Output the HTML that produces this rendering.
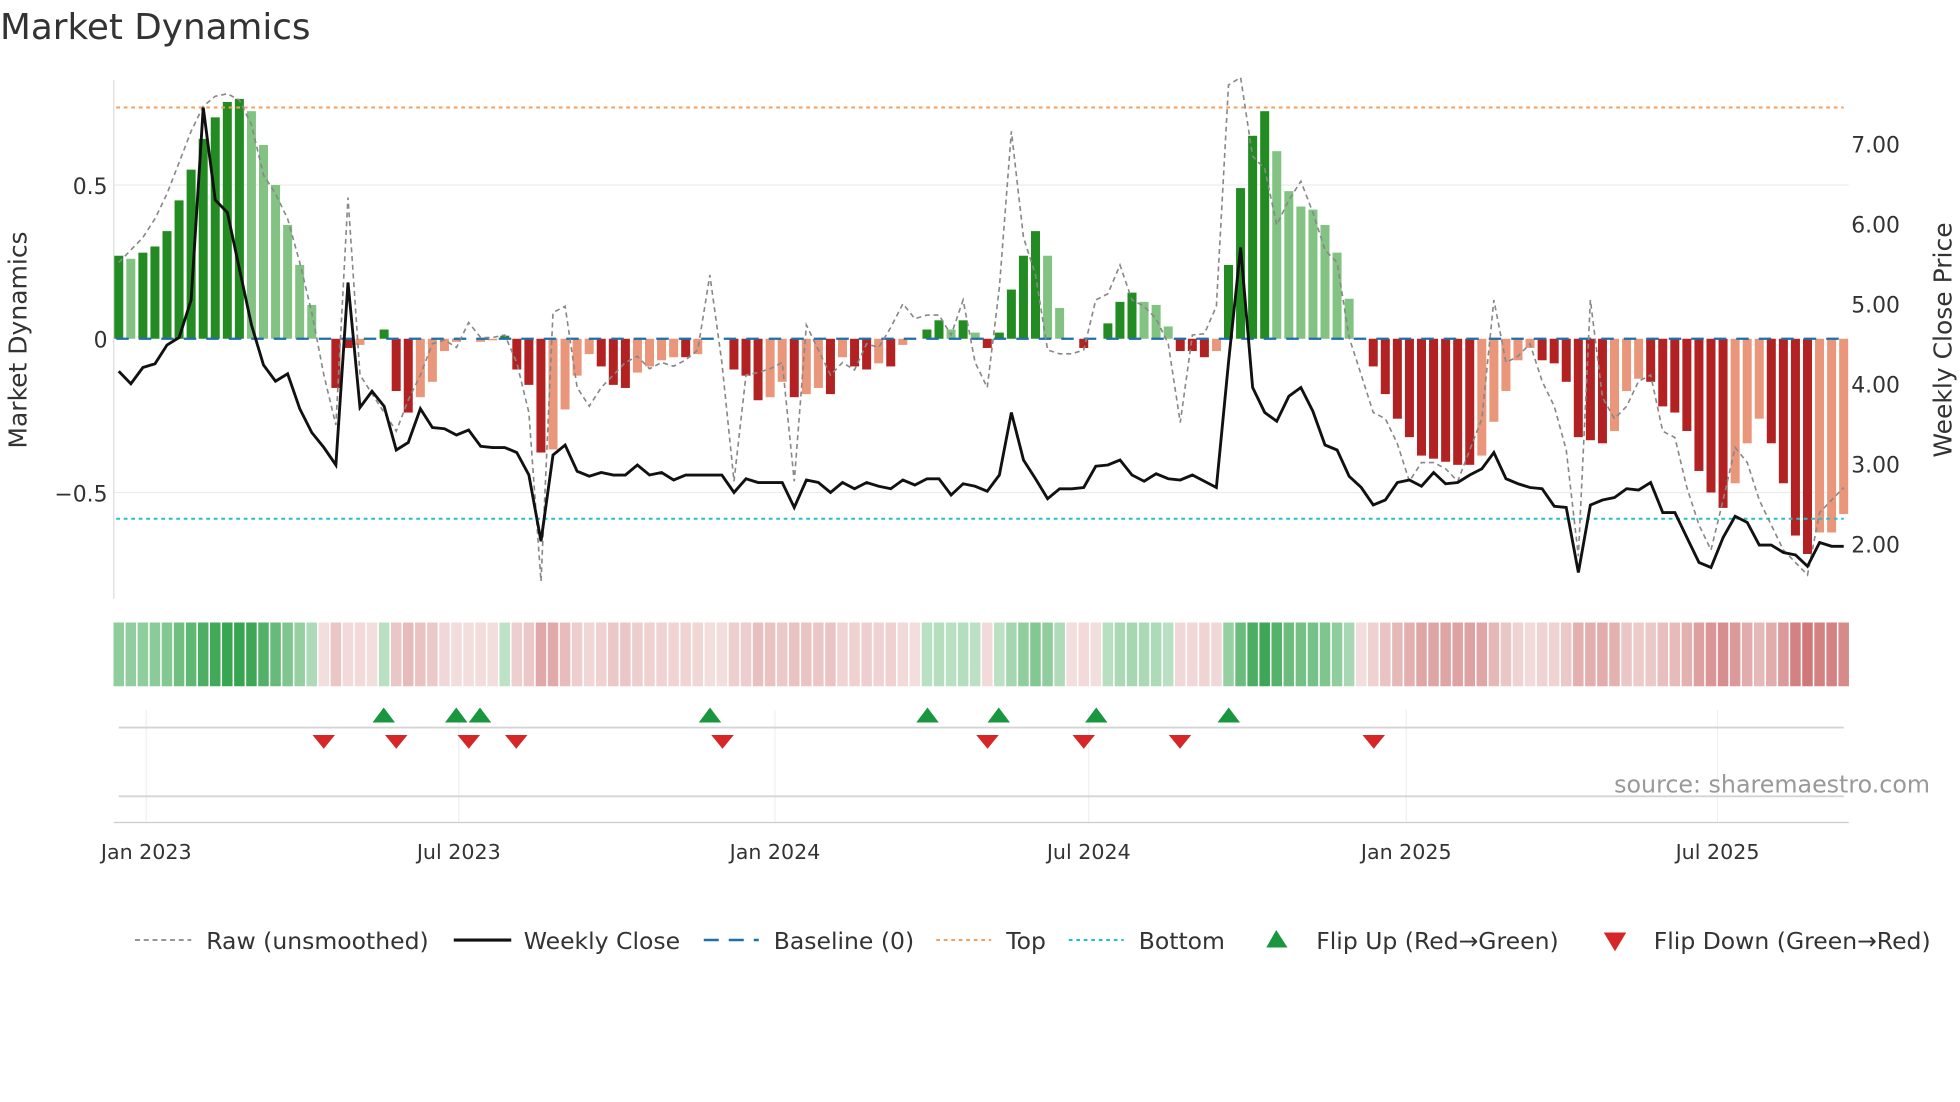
<!DOCTYPE html>
<html><head><meta charset="utf-8"><style>
html,body{margin:0;padding:0;background:#fff;width:1960px;height:1102px;overflow:hidden}
svg text{font-family:"DejaVu Sans","Liberation Sans",sans-serif;fill:#333}
</style></head><body>
<svg id="s" width="1960" height="1102" viewBox="0 0 1568 881.6" xmlns="http://www.w3.org/2000/svg">
<text x="0" y="31" font-size="28.6">Market Dynamics</text>
<g stroke="#ececec" stroke-width="1">
<line x1="91" y1="148" x2="1479" y2="148"/><line x1="91" y1="394" x2="1479" y2="394"/>
</g>
<line x1="91" y1="64" x2="91" y2="479" stroke="#ddd"/>
<g id="bars"></g>
<line x1="93" y1="86" x2="1475" y2="86" stroke="#f0a060" stroke-width="1.6" stroke-dasharray="3,3"/>
<line x1="93" y1="415" x2="1475" y2="415" stroke="#22c0d0" stroke-width="1.6" stroke-dasharray="3,3"/>
<line x1="93" y1="271" x2="1475" y2="271" stroke="#1f6fa8" stroke-width="1.8" stroke-dasharray="10,8"/>
<polyline id="raw" fill="none" stroke="#888" stroke-width="1.3" stroke-dasharray="4,3"/>
<polyline id="close" fill="none" stroke="#111" stroke-width="2.3"/>
<g font-size="17.5">
<text x="86" y="155" text-anchor="end">0.5</text>
<text x="86" y="278" text-anchor="end">0</text>
<text x="86" y="401" text-anchor="end">−0.5</text>
<text x="1481" y="122">7.00</text><text x="1481" y="186">6.00</text><text x="1481" y="250">5.00</text>
<text x="1481" y="314">4.00</text><text x="1481" y="378">3.00</text><text x="1481" y="442">2.00</text>
</g>
<text transform="translate(21,272) rotate(-90)" font-size="20" text-anchor="middle">Market Dynamics</text>
<text transform="translate(1561,272) rotate(-90)" font-size="20" text-anchor="middle">Weekly Close Price</text>
<g id="heat"></g>
<g stroke="#eef0f2"><line x1="117" y1="568" x2="117" y2="658"/><line x1="367" y1="568" x2="367" y2="658"/><line x1="620" y1="568" x2="620" y2="658"/><line x1="871" y1="568" x2="871" y2="658"/><line x1="1125" y1="568" x2="1125" y2="658"/><line x1="1374" y1="568" x2="1374" y2="658"/></g>
<line x1="95" y1="582" x2="1475" y2="582" stroke="#d4d4d4" stroke-width="1.5"/>
<line x1="95" y1="637" x2="1475" y2="637" stroke="#d4d4d4" stroke-width="1.5"/>
<line x1="91" y1="658" x2="1479" y2="658" stroke="#ccc"/>
<g id="tri"></g>
<text x="1544" y="634" font-size="19" text-anchor="end" fill="#999" style="fill:#999">source: sharemaestro.com</text>
<g font-size="16.5" text-anchor="middle">
<text x="117" y="687">Jan 2023</text><text x="367" y="687">Jul 2023</text><text x="620" y="687">Jan 2024</text>
<text x="871" y="687">Jul 2024</text><text x="1125" y="687">Jan 2025</text><text x="1374" y="687">Jul 2025</text>
</g>
<g font-size="18.8">
<line x1="108" y1="752" x2="153" y2="752" stroke="#888" stroke-width="1.4" stroke-dasharray="4,3"/>
<text x="165" y="759">Raw (unsmoothed)</text>
<line x1="363" y1="752" x2="409" y2="752" stroke="#111" stroke-width="2.5"/>
<text x="419" y="759">Weekly Close</text>
<line x1="563" y1="752" x2="607" y2="752" stroke="#1f6fa8" stroke-width="2" stroke-dasharray="12,8"/>
<text x="619" y="759">Baseline (0)</text>
<line x1="749" y1="752" x2="793" y2="752" stroke="#f0a060" stroke-width="1.6" stroke-dasharray="3,3"/>
<text x="805" y="759">Top</text>
<line x1="855" y1="752" x2="899" y2="752" stroke="#22c0d0" stroke-width="1.6" stroke-dasharray="3,3"/>
<text x="911" y="759">Bottom</text>
<polygon points="1013,758 1021,744 1030,758" fill="#1a9641"/>
<text x="1053" y="759">Flip Up (Red→Green)</text>
<polygon points="1283,746 1301,746 1292,761" fill="#d62728"/>
<text x="1323" y="759">Flip Down (Green→Red)</text>
</g>
</svg>
<script>
var V=[[.27,1],[.26,0],[.28,1],[.30,1],[.35,1],[.45,1],[.55,1],[.65,1],[.72,1],[.77,1],[.78,1],[.74,0],[.63,0],[.50,0],[.37,0],[.24,0],[.11,0],[0,0],[-.16,1],[-.03,1],[-.02,0],[0,0],[.03,1],[-.17,1],[-.24,1],[-.19,0],[-.14,0],[-.04,0],[-.01,0],[0,0],[-.01,0],[-.005,0],[.01,1],[-.10,1],[-.15,1],[-.37,1],[-.36,0],[-.23,0],[-.12,0],[-.05,0],[-.09,1],[-.15,1],[-.16,1],[-.11,0],[-.09,0],[-.07,0],[-.06,0],[-.06,1],[-.05,0],[0,0],[0,0],[-.10,1],[-.12,1],[-.20,1],[-.19,0],[-.14,0],[-.19,1],[-.18,0],[-.16,0],[-.18,1],[-.06,0],[-.09,1],[-.10,1],[-.08,0],[-.09,1],[-.02,0],[0,0],[.03,1],[.06,1],[.03,0],[.06,1],[.02,0],[-.03,1],[.02,1],[.16,1],[.27,1],[.35,1],[.27,0],[.10,0],[0,0],[-.03,1],[0,0],[.05,1],[.12,1],[.15,1],[.12,0],[.11,0],[.04,0],[-.04,1],[-.04,1],[-.06,1],[-.04,0],[.24,1],[.49,1],[.66,1],[.74,1],[.61,0],[.48,0],[.43,0],[.42,0],[.37,0],[.28,0],[.13,0],[0,0],[-.09,1],[-.18,1],[-.26,1],[-.32,1],[-.38,1],[-.39,1],[-.40,1],[-.41,1],[-.41,1],[-.38,0],[-.27,0],[-.17,0],[-.07,0],[-.03,0],[-.07,1],[-.08,1],[-.14,1],[-.32,1],[-.33,1],[-.34,1],[-.30,0],[-.17,0],[-.13,0],[-.14,1],[-.22,1],[-.24,1],[-.30,1],[-.43,1],[-.50,1],[-.55,1],[-.47,0],[-.34,0],[-.26,0],[-.34,1],[-.47,1],[-.64,1],[-.70,1],[-.63,0],[-.63,0],[-.57,0]];
var b="",h="";
V.forEach(function(v,i){var x=95+9.65*i,val=v[0],y=271-246*val;
 var c=val>=0?(v[1]?"#228b22":"#82c282"):(v[1]?"#b22222":"#e9967a");
 if(Math.abs(val)>0.004)b+='<rect x="'+(x-3.6)+'" y="'+Math.min(y,271)+'" width="7.2" height="'+Math.abs(246*val)+'" fill="'+c+'"/>';
 var a,col;if(val>0){a=0.3+0.65*val/0.78;col="44,160,70";}else{a=0.18+0.55*(-val)/0.7;col="190,70,70";}
 h+='<rect x="'+(x-4.2)+'" y="498" width="8.4" height="51" fill="rgba('+col+','+a.toFixed(2)+')"/>';});
document.getElementById("bars").innerHTML=b;document.getElementById("heat").innerHTML=h;
var C=[297,307,294,291,276,270,240,86,160,170,215,260,292,305,299,327,346,358,372,226,326,313,325,360,354,327,342,343,348,344,357,358,358,362,380,433,364,356,377,381,378,380,380,372,380,378,384,380,380,380,380,394,383,386,386,386,406,384,386,394,386,391,386,389,391,384,388,383,383,396,387,389,393,380,330,368,383,399,391,391,390,373,372,368,380,385,379,383,384,380,385,390,290,198,310,330,337,317,310,329,356,360,381,390,404,400,386,384,389,378,387,386,380,375,362,383,387,390,391,405,406,458,404,400,398,391,392,386,410,410,430,450,454,430,413,418,436,436,442,444,453,434,437,437];
var R=[210,200,190,175,155,130,105,85,77,75,80,100,140,155,175,210,250,300,340,158,300,315,330,345,320,300,275,272,278,258,270,270,268,290,330,465,250,245,310,325,310,300,290,285,295,290,293,288,280,220,290,385,300,298,295,290,385,260,280,300,290,296,275,278,262,243,255,252,252,268,240,290,310,230,105,190,220,280,283,283,280,240,235,212,240,245,255,275,338,268,267,245,68,62,125,135,180,160,145,170,200,210,270,300,330,335,355,385,370,370,375,385,360,335,240,290,285,275,305,325,360,445,240,318,335,325,305,300,345,350,390,420,440,400,358,370,400,420,440,450,460,410,400,390];
function pts(a){return a.map(function(y,i){return (95+9.65*i).toFixed(1)+","+y}).join(" ")}
document.getElementById("close").setAttribute("points",pts(C));
document.getElementById("raw").setAttribute("points",pts(R));
var t="";[307,365,384,568,742,799,877,983].forEach(function(x){t+='<polygon points="'+(x-9)+',578 '+x+',566 '+(x+9)+',578" fill="#1a9641"/>'});
[259,317,375,413,578,790,867,944,1099].forEach(function(x){t+='<polygon points="'+(x-9)+',588 '+(x+9)+',588 '+x+',599" fill="#d62728"/>'});
document.getElementById("tri").innerHTML=t;
</script>
</body></html>
